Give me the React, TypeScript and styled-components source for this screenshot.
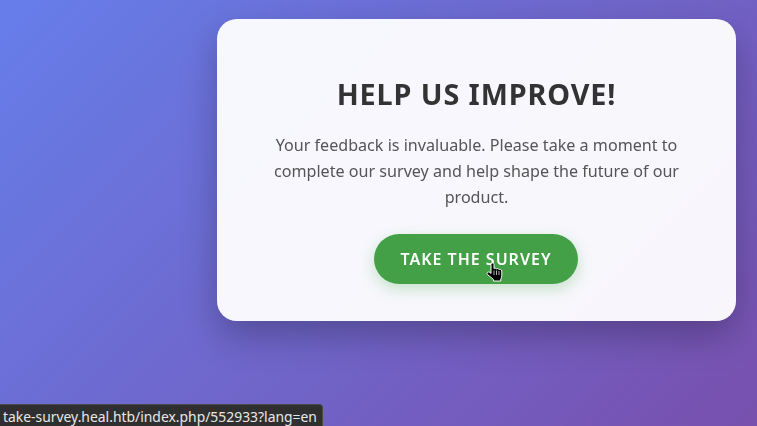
import React from 'react';
import styled, { createGlobalStyle } from 'styled-components';

const GlobalStyle = createGlobalStyle`
  html, body {
    margin: 0;
    padding: 0;
    height: 100%;
    overflow: hidden;
  }

  body {
    font-family: "Noto Sans", sans-serif;
  }
`;

function HandCursor() {
  return (
    <CursorIcon width="18" height="20" viewBox="0 0 18 20">
      <path
        d="M6.5 1C7.5 1 8 1.700 8 2.500V6.500C8.800 6 10 6 10.500 6.800C11.300 6.300 12.500 6.500 13 7.500C13.800 7.100 15.500 7.400 15.800 9V13.500C15.800 15 15.300 16 14.800 17V19H7.500V17.500L1.500 12.500C.5 11.500 1 10 2.500 10C3.500 10 4.500 11 5 11.500V2.500C5 1.700 5.600 1 6.500 1Z"
        fill="#000"
        stroke="#fff"
        strokeWidth="1"
        strokeLinejoin="round"
      />
      <path d="M8 8.500V13M10.500 8.500V13M13 9V13" stroke="#fff" strokeWidth="0.700" fill="none" />
    </CursorIcon>
  );
}

export default function App() {
  return (
    <>
      <GlobalStyle />
      <Page>
        <Card>
          <Title>HELP US IMPROVE!</Title>
          <Description>
            Your feedback is invaluable. Please take a moment to complete our survey and help shape
            the future of our product.
          </Description>
          <SurveyButton href="#">
            TAKE THE SURVEY
            <HandCursor />
          </SurveyButton>
        </Card>
        <StatusBar>take-survey.heal.htb/index.php/552933?lang=en</StatusBar>
      </Page>
    </>
  );
}

const Page = styled.div`
  position: relative;
  box-sizing: border-box;
  width: 757px;
  height: 426px;
  padding: 19px 21px 0 217px;
  overflow: hidden;
  background: linear-gradient(135deg, #667eea 0%, #7850ae 100%);
`;

const Card = styled.div`
  box-sizing: border-box;
  display: flex;
  flex-direction: column;
  align-items: center;
  width: 519px;
  height: 302px;
  padding: 55px 40px 0;
  text-align: center;
  background: rgba(255, 255, 255, 0.95);
  border-radius: 20px;
  box-shadow: 0 15px 35px rgba(0, 0, 0, 0.25);
  will-change: transform;
`;

const Title = styled.h1`
  margin: 0 0 18px;
  font-size: 28.8px;
  line-height: 40px;
  font-weight: 700;
  letter-spacing: 0.9px;
  color: #333333;
`;

const Description = styled.p`
  margin: 0 0 24px;
  font-size: 16.13px;
  line-height: 26px;
  color: #555555;
`;

const SurveyButton = styled.a`
  position: relative;
  box-sizing: border-box;
  display: flex;
  align-items: center;
  justify-content: center;
  width: 204px;
  height: 50px;
  margin-right: 1px;
  font-size: 16px;
  font-weight: 600;
  letter-spacing: 1px;
  color: #ffffff;
  text-decoration: none;
  background: #43a047;
  border-radius: 25px;
  box-shadow: 0 5px 15px rgba(76, 175, 80, 0.3);
`;

const CursorIcon = styled.svg`
  position: absolute;
  left: 112px;
  top: 28px;
`;

const StatusBar = styled.div`
  position: absolute;
  left: 0;
  bottom: 0;
  box-sizing: border-box;
  width: 323px;
  height: 22px;
  padding: 0 3px;
  font-size: 13.9px;
  line-height: 24px;
  white-space: nowrap;
  color: #e8e8e8;
  background: #2f2f2f;
  border: 1px solid #4a4a4a;
  border-left: none;
  border-bottom: none;
  border-top-right-radius: 4px;
`;
